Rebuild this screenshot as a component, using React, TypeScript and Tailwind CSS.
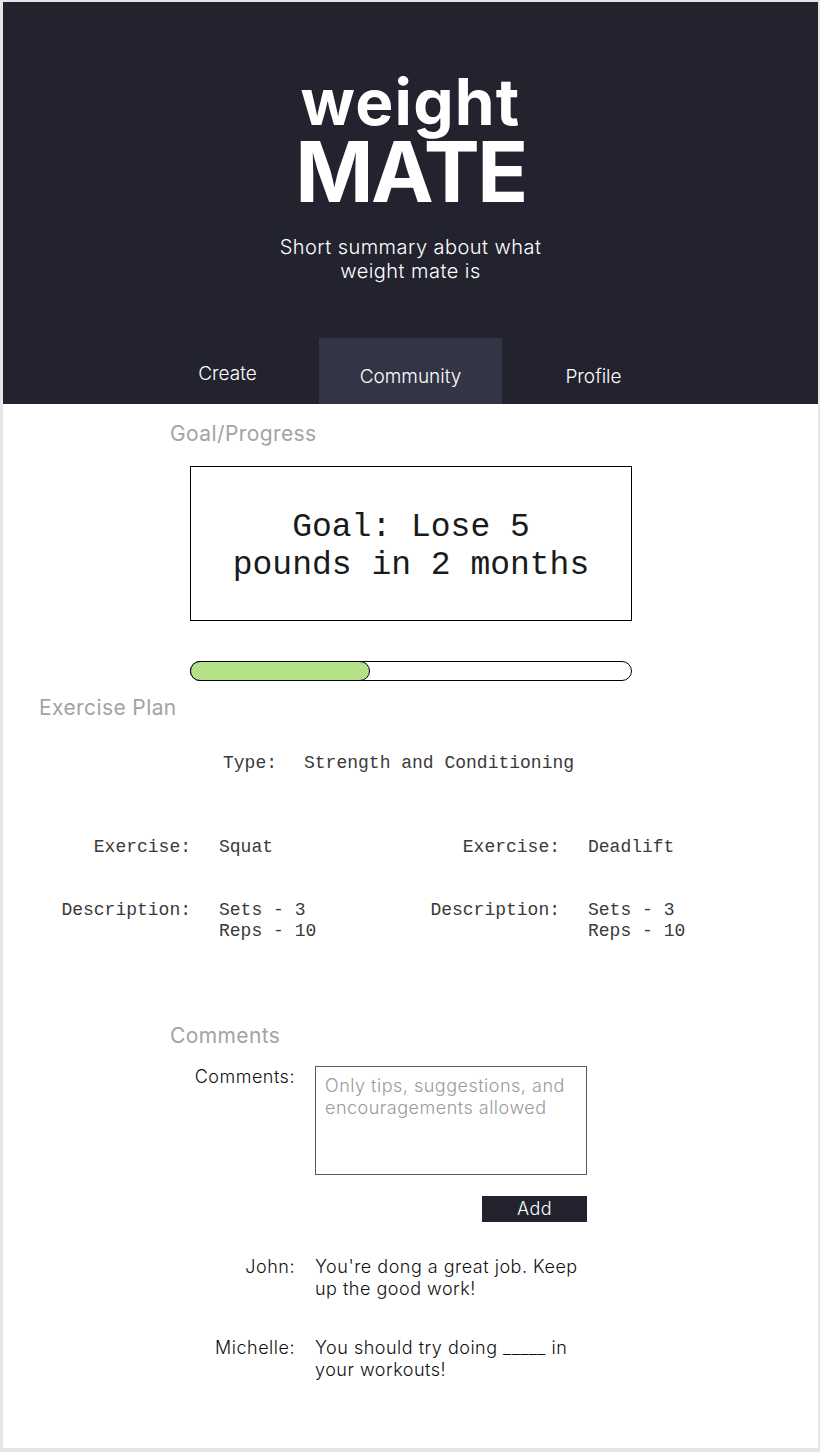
import React from "react";

const sans = "font-['Inter','Noto_Sans',sans-serif]";
const mono = "font-['Liberation_Mono','Courier_New',monospace]";

const exercises = [
  { name: "Squat", sets: 3, reps: 10 },
  { name: "Deadlift", sets: 3, reps: 10 },
];

const comments = [
  { who: "John:", lines: ["You're dong a great job. Keep", "up the good work!"] },
  { who: "Michelle:", lines: ["You should try doing _____ in", "your workouts!"] },
];

function SectionTitle({ children, className = "" }: { children: React.ReactNode; className?: string }) {
  return (
    <h2 className={`${sans} text-[21px] leading-[24px] tracking-[0.4px] text-[#a3a3a3] font-normal ${className}`}>
      {children}
    </h2>
  );
}

function Header() {
  return (
    <header className="h-[402px] bg-[#22232f] flex flex-col items-center text-white">
      <div className="mt-[70px] flex flex-col items-center">
        <span className={`${sans} font-bold text-[64px] leading-[60px] tracking-[1.2px]`}>weight</span>
        <span className={`${sans} font-bold text-[84px] leading-[80px] tracking-[-2.5px]`}>MATE</span>
      </div>
      <p className={`${sans} font-light text-[20px] leading-[24px] tracking-[0.45px] text-center mt-[23px]`}>
        Short summary about what
        <br />
        weight mate is
      </p>
      {/* Tabs */}
      <nav className={`${sans} font-light text-[19px] mt-auto flex`}>
        <a className="w-[183px] h-[66px] flex items-center justify-center pt-[6px]">Create</a>
        <a className="w-[183px] h-[66px] flex items-center justify-center pt-[12px] bg-[#333546]">Community</a>
        <a className="w-[183px] h-[66px] flex items-center justify-center pt-[12px]">Profile</a>
      </nav>
    </header>
  );
}

export default function App() {
  return (
    <div className="h-[1452px] bg-[#e6e6e6] pt-[2px] pl-[3px] pr-[2px] pb-[4px] flex flex-col">
      <div className="flex-1 bg-white flex flex-col">
        <Header />

        {/* Goal / Progress */}
        <SectionTitle className="mt-[18px] ml-[167px]">Goal/Progress</SectionTitle>
        <div className="mt-[20px] ml-[187px] w-[442px] h-[155px] border border-black flex items-center justify-center pt-[6px]">
          <p className={`${mono} text-[33px] leading-[38px] text-[#1a1a1a] text-center`}>
            Goal: Lose 5
            <br />
            pounds in 2 months
          </p>
        </div>
        <div className="mt-[40px] ml-[187px] w-[442px] h-[20px] rounded-full border border-black">
          <div className="-m-px h-[20px] w-[180px] rounded-full border border-black bg-[#b3e287]" />
        </div>

        {/* Exercise plan */}
        <SectionTitle className="mt-[15px] ml-[36px]">Exercise Plan</SectionTitle>
        <div className={`${mono} text-[18px] leading-[21px] text-[#3a3a3a]`}>
          <div className="mt-[33px] ml-[220px] flex gap-[27px]">
            <span>Type:</span>
            <span>Strength and Conditioning</span>
          </div>
          <div className="mt-[63px] flex">
            {exercises.map((ex) => (
              <div key={ex.name} className="w-[369px] grid grid-cols-[188px_1fr] gap-x-[28px] gap-y-[42px]">
                <span className="text-right">Exercise:</span>
                <span>{ex.name}</span>
                <span className="text-right">Description:</span>
                <span>
                  Sets - {ex.sets}
                  <br />
                  Reps - {ex.reps}
                </span>
              </div>
            ))}
          </div>
        </div>

        {/* Comments */}
        <SectionTitle className="mt-[82px] ml-[167px]">Comments</SectionTitle>
        <div className={`${sans} text-[18px] leading-[22px] tracking-[0.5px] text-[#111] font-light`}>
          <div className="mt-[18px] grid grid-cols-[292px_272px] gap-x-[20px]">
            <span className="text-right">Comments:</span>
            <div className="flex flex-col items-end">
              <div className="w-[272px] h-[109px] border border-[#5a5a5a] pt-[8px] pl-[9px] text-[#9a9a9a]">
                Only tips, suggestions, and
                <br />
                encouragements allowed
              </div>
              <button className="mt-[21px] w-[105px] h-[26px] bg-[#22232f] text-white text-[18px] leading-[26px]">
                Add
              </button>
            </div>
          </div>
          {comments.map((c, i) => (
            <div
              key={c.who}
              className={`grid grid-cols-[292px_272px] gap-x-[20px] ${i === 0 ? "mt-[34px]" : "mt-[37px]"}`}
            >
              <span className="text-right">{c.who}</span>
              <p className="whitespace-nowrap">
                {c.lines[0]}
                <br />
                {c.lines[1]}
              </p>
            </div>
          ))}
        </div>
      </div>
    </div>
  );
}
